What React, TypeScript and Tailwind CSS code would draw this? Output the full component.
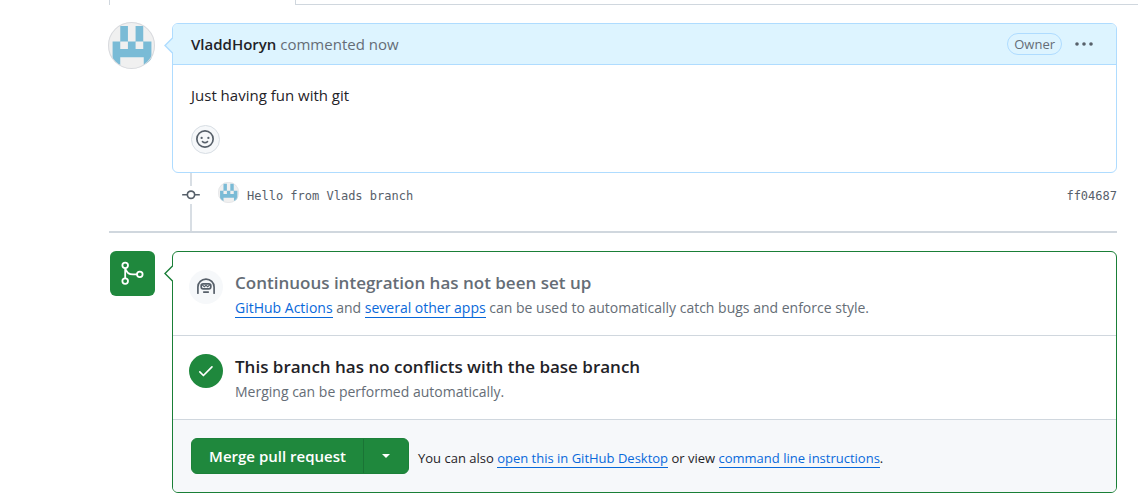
import React from "react";

const sans = "font-['Open_Sans','Noto_Sans',sans-serif]";
const mono = "font-['DejaVu_Sans_Mono','Liberation_Mono',monospace]";

function Avatar({ className }: { className: string }) {
  return (
    <svg viewBox="0 0 46 46" className={className} role="img" aria-label="VladdHoryn">
      <circle cx="23" cy="23" r="23" fill="#f0f0f0" />
      <path
        fill="#7abbd6"
        d="M12 4h7.500v15H27V4h7.500v15h8v16.500q-2 4-7.500 6.500v-7.500H12V42q-5-2-7.500-6.500V19H12z"
      />
      <path fill="#f0f0f0" d="M12 19h7.500v7.500H12zM27 19h7.500v7.500H27z" />
      <circle cx="23" cy="23" r="22.500" fill="none" stroke="#d8dade" />
    </svg>
  );
}

function Pointer({ fill, stroke }: { fill: string; stroke: string }) {
  return (
    <svg viewBox="0 0 9 17" className="absolute -left-[9px] top-[13px] h-[17px] w-[9px]" aria-hidden="true">
      <path d="M9 0.500 1 8.500l8 8" fill={fill} stroke={stroke} strokeWidth="1.400" />
    </svg>
  );
}

function SmileyIcon() {
  return (
    <svg viewBox="0 0 16 16" className="size-[18px]" aria-hidden="true">
      <circle cx="8" cy="8" r="7.250" fill="none" stroke="currentColor" strokeWidth="1.500" />
      <circle cx="5" cy="7" r="1" fill="currentColor" />
      <circle cx="11" cy="7" r="1" fill="currentColor" />
      <path d="M5.800 10.250Q8 12.300 10.200 10.250" fill="none" stroke="currentColor" strokeWidth="1.500" strokeLinecap="round" />
    </svg>
  );
}

function CommitIcon() {
  return (
    <svg viewBox="0 0 16 16" className="size-[18px]" fill="currentColor" aria-hidden="true">
      <path d="M11.930 8.500a4.002 4.002 0 0 1-7.860 0H.75a.75.75 0 0 1 0-1.500h3.320a4.002 4.002 0 0 1 7.860 0h3.320a.75.75 0 0 1 0 1.500Zm-1.430-.75a2.500 2.500 0 1 0-5 0 2.500 2.500 0 0 0 5 0Z" />
    </svg>
  );
}

function MergeIcon() {
  return (
    <svg viewBox="0 0 24 24" className="size-[27px]" fill="none" stroke="currentColor" strokeWidth="1.600" aria-hidden="true">
      <circle cx="5.500" cy="4.750" r="2.500" />
      <circle cx="5.500" cy="18.750" r="2.500" />
      <circle cx="18.500" cy="12.750" r="2.500" />
      <path d="M5.500 7.250v9M5.500 7.250q1.500 5.500 7 5.500H16" />
    </svg>
  );
}

function HubotIcon() {
  return (
    <svg viewBox="0 0 16 16" className="size-[18px]" fill="none" stroke="currentColor" strokeWidth="1.500" strokeLinecap="round" aria-hidden="true">
      <path d="M.8 13.500V8a7.200 7 0 0 1 14.400 0v5.500" />
      <rect x="3.700" y="5.200" width="8.600" height="4.400" rx="1.800" />
      <path d="m5 6.500 1.500 1.200L8 6.500l1.500 1.200L11 6.500" strokeWidth="1" />
      <path d="M6 12.500h4" />
    </svg>
  );
}

const link = "border-b border-[#0969da] text-[#0969da]";

export default function App() {
  return (
    <div className={`${sans} min-h-screen bg-white pl-[109px] text-[15px] text-[#1f2328]`}>
      <div className="flex h-[5px]" aria-hidden="true">
        <div className="w-[187px] border-x border-[#d0d7de]" />
        <div className="grow border-b border-[#d0d7de]" />
      </div>

      <main className="pr-[21px]">
        <article className="flex items-start gap-[17px] pt-[18px]">
          <Avatar className="-mt-px -ml-px size-[47px] shrink-0" />
          <div className="relative min-w-0 grow rounded-md border border-[#afdcff] bg-white">
            <header className="flex h-[41px] items-center rounded-t-[5px] border-b border-[#afdcff] bg-[#ddf4ff] px-[18px]">
              <h3 className="grow text-[#656d76]">
                <strong className="font-semibold text-[#1f2328]">VladdHoryn</strong> commented now
              </h3>
              <span className="rounded-full border border-[#afdcff] px-[6px] text-[13px] leading-[20px] font-medium text-[#656d76]">Owner</span>
              <button type="button" aria-label="Show options" className="mr-[5px] ml-[13px] text-[#57606a]">
                <svg viewBox="0 0 18 4" className="h-[4px] w-[18px]" fill="currentColor" aria-hidden="true">
                  <circle cx="2" cy="2" r="1.800" />
                  <circle cx="9" cy="2" r="1.800" />
                  <circle cx="16" cy="2" r="1.800" />
                </svg>
              </button>
            </header>
            <Pointer fill="#ddf4ff" stroke="#afdcff" />
            <div className="p-[18px]">
              <p className="leading-6">Just having fun with git</p>
              <button type="button" aria-label="Add reaction" className="mt-[18px] flex size-[29px] items-center rounded-full border border-[#d8dee4] bg-[#f6f8fa] pb-px pl-[4px] text-[#57606a]">
                <SmileyIcon />
              </button>
            </div>
          </div>
        </article>

        <div className="flex h-[60px] border-b-2 border-[#d0d7de] pl-[72px]">
          <div className="flex w-[20px] flex-col items-center">
            <div className="h-[13px] w-[2px] bg-[#d8dee4]" />
            <div className="flex h-[18px] items-center text-[#57606a]"><CommitIcon /></div>
            <div className="w-[2px] grow bg-[#d8dee4]" />
          </div>
          <div className={`${mono} flex grow items-start pt-[9px] text-[12px] leading-[28px] text-[#57606a]`}>
            <Avatar className="mr-[8px] ml-[17px] size-[21px]" />
            <span className="grow">Hello from Vlads branch</span>
            <span>ff04687</span>
          </div>
        </div>

        <section className="flex items-start gap-[17px] pt-[18px] pl-px">
          <div className="flex size-[45px] shrink-0 items-center justify-center rounded-md bg-[#1f883d] text-white">
            <MergeIcon />
          </div>
          <div className="relative min-w-0 grow rounded-md border border-[#1a7f37] bg-white">
            <Pointer fill="#ffffff" stroke="#1a7f37" />
            <div className="flex min-h-[84px] border-b border-[#d0d7de] px-[16px] pt-[18px]">
              <div className="mr-[12px] flex size-[34px] shrink-0 items-center justify-center rounded-full bg-[#f6f8fa] text-[#57606a]">
                <HubotIcon />
              </div>
              <div className="text-[14px] text-[#656d76]">
                <h3 className="text-[17px] leading-[26px] font-semibold">Continuous integration has not been set up</h3>
                <p className="leading-[24px]">
                  <a href="#actions" className={link}>GitHub Actions</a> and <a href="#apps" className={link}>several other apps</a> can be used to automatically catch bugs and enforce style.
                </p>
              </div>
            </div>
            <div className="flex min-h-[84px] border-b border-[#d0d7de] px-[16px] pt-[18px]">
              <div className="mr-[12px] flex size-[34px] shrink-0 items-center justify-center rounded-full bg-[#1f883d] text-white">
                <svg viewBox="0 0 16 16" className="size-[18px]" fill="none" stroke="currentColor" strokeWidth="1.500" strokeLinecap="round" strokeLinejoin="round" aria-hidden="true">
                  <path d="m2.500 8.800 3.200 3.200 7.600-7.600" />
                </svg>
              </div>
              <div className="text-[14px] text-[#656d76]">
                <h3 className="text-[17px] leading-[26px] font-semibold text-[#1f2328]">This branch has no conflicts with the base branch</h3>
                <p className="leading-[24px]">Merging can be performed automatically.</p>
              </div>
            </div>
            <div className="flex min-h-[72px] items-center rounded-b-[5px] bg-[#f6f8fa] px-[18px]">
              <div className="flex h-[36px] shrink-0 rounded-md border border-[#1c8139] bg-[#1f883d] text-white">
                <button type="button" className="w-[171px] text-[15px] font-semibold">Merge pull request</button>
                <button type="button" aria-label="Select merge method" className="flex w-[45px] items-center justify-center border-l border-[#1a7435]">
                  <svg viewBox="0 0 8 4" className="h-[4px] w-[8px]" fill="currentColor" aria-hidden="true"><path d="M0 0h8L4 4z" /></svg>
                </button>
              </div>
              <p className="ml-[9px] pt-[3px] text-[13px] leading-5">
                You can also <a href="#desktop" className={link}>open this in GitHub Desktop</a> or view <a href="#cli" className={link}>command line instructions</a>.
              </p>
            </div>
          </div>
        </section>
      </main>
    </div>
  );
}
